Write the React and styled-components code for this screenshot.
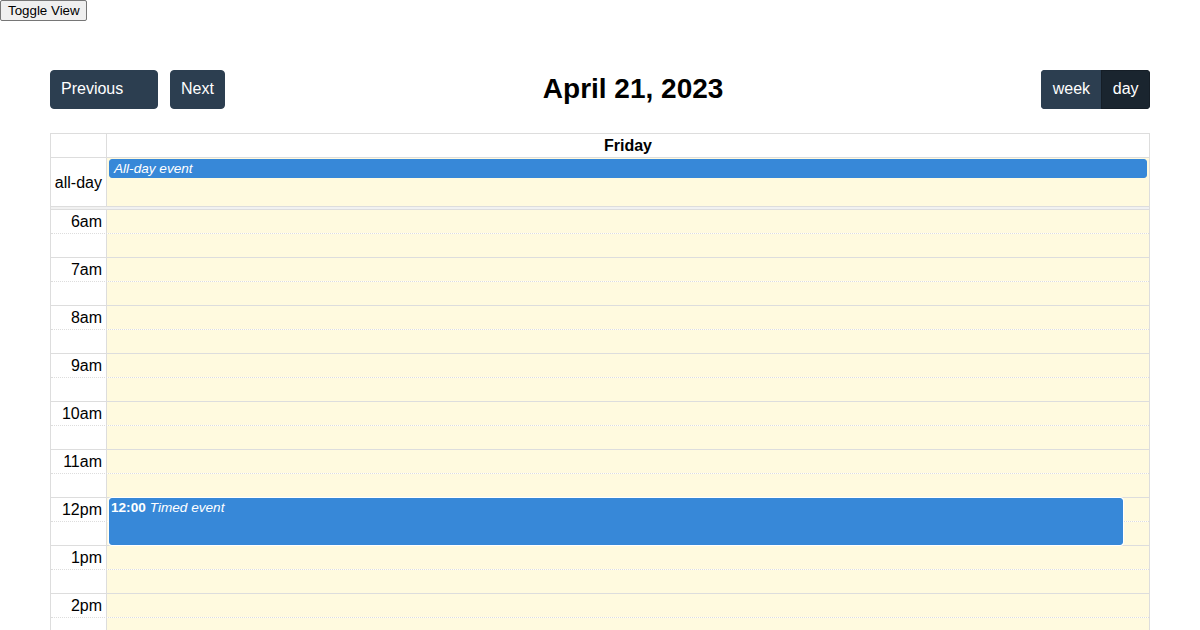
import React from 'react';
import styled, { createGlobalStyle } from 'styled-components';

const GlobalStyle = createGlobalStyle`
  html, body {
    margin: 0;
    height: 100%;
    overflow: hidden;
    background: #fff;
    font-family: "Liberation Sans", Arial, sans-serif;
    color: #000;
  }
`;

// visible part of the day view, 6am to 2pm
const hours = [];
for (let h = 6; h <= 14; h++) hours.push(h);

function hourLabel(h) {
  const n = h % 12 || 12;
  return n + (h < 12 ? 'am' : 'pm');
}

export default function App() {
  return (
    <>
      <GlobalStyle />
      <ToggleButton>Toggle View</ToggleButton>
      <Calendar>
        <Toolbar>
          <Chunk>
            <NavButton $width={108}>Previous</NavButton>
            <NavButton>Next</NavButton>
          </Chunk>
          <Title>April 21, 2023</Title>
          <ButtonGroup>
            <GroupButton>week</GroupButton>
            <GroupButton $active>day</GroupButton>
          </ButtonGroup>
        </Toolbar>

        <Grid>
          <Row>
            <Axis />
            <DayHeader>Friday</DayHeader>
          </Row>
          <Row>
            <Axis $height={48}>all-day</Axis>
            <AllDayCell>
              <AllDayEvent>All-day event</AllDayEvent>
            </AllDayCell>
          </Row>
          <Divider />
          <SlotBody>
            {hours.map((h) => (
              <React.Fragment key={h}>
                <SlotRow $minor={false}>
                  <SlotLabel>{hourLabel(h)}</SlotLabel>
                  <SlotLane />
                </SlotRow>
                <SlotRow $minor>
                  <SlotLabel />
                  <SlotLane />
                </SlotRow>
              </React.Fragment>
            ))}
            <EventLayer>
              <TimedEvent $top={288} $height={47}>
                <EventTime>12:00</EventTime>
                <EventTitle>Timed event</EventTitle>
              </TimedEvent>
            </EventLayer>
          </SlotBody>
        </Grid>
      </Calendar>
    </>
  );
}

const ToggleButton = styled.button`
  display: block;
  margin: 0;
  padding: 1px 6px 1px 7px;
  height: 21px;
  font-family: "Liberation Sans", Arial, sans-serif;
  font-size: 13.333px;
  color: #000;
  background: #efefef;
  border: 1px solid #767676;
  border-radius: 2px;
`;

const Calendar = styled.div`
  margin: 49px 50px 0;
  font-size: 16px;
`;

const Toolbar = styled.div`
  display: flex;
  justify-content: space-between;
  align-items: center;
  margin-bottom: 24px;
`;

const Chunk = styled.div`
  display: flex;
  gap: 12px;
`;

const Title = styled.h2`
  margin: 0 0 2px;
  font-size: 28px;
  font-weight: bold;
  line-height: 1.2;
`;

const NavButton = styled.button`
  box-sizing: border-box;
  width: ${(p) => (p.$width ? p.$width + 'px' : 'auto')};
  padding: 6.4px 10px 6.4px 10px;
  font-family: inherit;
  font-size: 16px;
  line-height: 1.5;
  text-align: left;
  color: #fff;
  background: #2c3e50;
  border: 1px solid #2c3e50;
  border-radius: 4px;
`;

const ButtonGroup = styled.div`
  display: flex;
  border-radius: 4px;
  overflow: hidden;
`;

const GroupButton = styled.button`
  padding: 6.4px 10.4px;
  font-family: inherit;
  font-size: 16px;
  line-height: 1.5;
  color: #fff;
  background: ${(p) => (p.$active ? '#1a252f' : '#2c3e50')};
  border: 1px solid ${(p) => (p.$active ? '#151e27' : '#2c3e50')};
  border-radius: 0;
`;

const Grid = styled.div`
  border: 1px solid #ddd;
  border-bottom: none;
`;

const Row = styled.div`
  display: grid;
  grid-template-columns: 56px 1fr;
  border-bottom: 1px solid #ddd;
`;

const Axis = styled.div`
  box-sizing: border-box;
  height: ${(p) => (p.$height ? p.$height + 'px' : 'auto')};
  display: flex;
  align-items: center;
  justify-content: flex-end;
  padding: 2px 4px 0;
  border-right: 1px solid #ddd;
  white-space: nowrap;
`;

const DayHeader = styled.div`
  padding: 2px 4px;
  font-weight: bold;
  line-height: 19px;
  text-align: center;
`;

const AllDayCell = styled.div`
  background: rgba(255, 220, 40, 0.15);
  padding: 1px 2px 0 2px;
`;

const AllDayEvent = styled.div`
  height: 19px;
  box-sizing: border-box;
  padding: 0 4px;
  font-size: 13.6px;
  line-height: 17px;
  font-style: italic;
  color: #fff;
  background: #3788d8;
  border: 1px solid #3788d8;
  border-radius: 3px;
`;

const Divider = styled.div`
  height: 2px;
  background: rgba(208, 208, 208, 0.3);
  border-bottom: 1px solid #ddd;
`;

const SlotBody = styled.div`
  position: relative;
`;

const SlotRow = styled.div`
  display: grid;
  grid-template-columns: 56px 1fr;
  height: 24px;
  box-sizing: border-box;
  border-bottom: 1px ${(p) => (p.$minor ? 'solid' : 'dotted')} #ddd;
`;

const SlotLabel = styled.div`
  box-sizing: border-box;
  display: flex;
  align-items: center;
  justify-content: flex-end;
  padding: 2px 4px 0;
  border-right: 1px solid #ddd;
  white-space: nowrap;
`;

const SlotLane = styled.div`
  background: rgba(255, 220, 40, 0.15);
`;

const EventLayer = styled.div`
  position: absolute;
  top: 0;
  bottom: 0;
  left: 56px;
  right: 0;
`;

const TimedEvent = styled.div`
  position: absolute;
  top: ${(p) => p.$top}px;
  height: ${(p) => p.$height}px;
  left: 2px;
  right: 2.5%;
  box-sizing: border-box;
  display: flex;
  align-items: flex-start;
  gap: 4px;
  padding: 0 1px;
  font-size: 13.6px;
  line-height: 17px;
  color: #fff;
  background: #3788d8;
  border: 1px solid #3788d8;
  border-radius: 3px;
  box-shadow: 0 0 0 1px #fff;
`;

const EventTime = styled.span`
  font-weight: bold;
`;

const EventTitle = styled.span`
  font-style: italic;
`;
